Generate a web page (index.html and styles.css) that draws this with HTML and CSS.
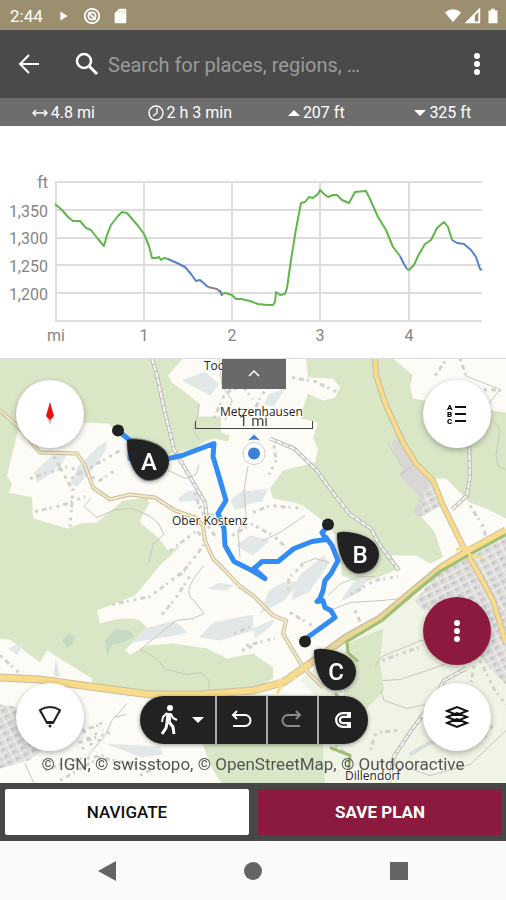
FILE: index.html
```
<!DOCTYPE html>
<html lang="en">
	<head>
		<meta charset="UTF-8"/>
		<meta name="viewport" content="width=device-width, initial-scale=1"/>
		<title>Route planner</title>
		<link rel="stylesheet" href="styles.css">
	</head>
	<body>
		<div class="statusBar">
			<span class="clock">2:44</span>
			<svg class="statusIcon" viewBox="0 0 20 20"><path d="M6 5l8 5-8 5z" fill="#fff"/></svg>
			<svg class="statusIcon" viewBox="0 0 20 20" fill="none" stroke="#fff" stroke-width="2"><circle cx="10" cy="10" r="8"/><circle cx="10" cy="10" r="4"/><path d="M6 6l8 8"/></svg>
			<svg class="statusIcon" viewBox="0 0 20 20"><path d="M9 2h7q1 0 1 1v14q0 1-1 1H5q-1 0-1-1V7z" fill="#fff"/><path d="M9 4v2M12 4v2M15 4v2" stroke="#c4baa2"/></svg>
			<span class="fill"></span>
			<svg class="statusIcon" viewBox="0 0 20 20"><path d="M1 6q9-7 18 0l-9 11z" fill="#fff"/></svg>
			<svg class="statusIcon" viewBox="0 0 20 20"><path d="M17 3v14H3z" fill="none" stroke="#fff" stroke-width="2"/><path d="M12 8v9H3z" fill="#fff"/></svg>
			<svg class="statusIcon" viewBox="0 0 20 20"><path d="M8 2h4v2h3v14H5V4h3z" fill="#fff"/></svg>
		</div>
		<header class="searchBar">
			<button type="button" class="iconButton" aria-label="Back"><svg width="24" height="24" viewBox="0 0 24 24" fill="none" stroke="#fff" stroke-width="2"><path d="M22 12H4M12 3l-9 9 9 9"/></svg></button>
			<label class="searchIcon" for="search"><svg width="24" height="24" viewBox="0 0 24 24" fill="none" stroke="#fff"><circle cx="9" cy="9" r="7" stroke-width="2.5"/><path d="M14 14l8 8" stroke-width="3"/></svg></label>
			<input type="text" id="search" class="searchInput" aria-label="Search" placeholder="Search for places, regions, …"/>
			<button type="button" class="iconButton" aria-label="More"><svg width="24" height="24" viewBox="0 0 24 24" fill="#fff"><circle cx="12" cy="4" r="3"/><circle cx="12" cy="12" r="3"/><circle cx="12" cy="20" r="3"/></svg></button>
		</header>
		<div class="stats">
			<span class="stat"><svg width="16" height="16" viewBox="0 0 16 16" fill="none" stroke="#fff" stroke-width="1.5"><path d="M1 8h14M4 5L1 8l3 3M12 5l3 3-3 3"/></svg>4.8 mi</span>
			<span class="stat"><svg width="16" height="16" viewBox="0 0 16 16" fill="none" stroke="#fff" stroke-width="1.4"><circle cx="8" cy="8" r="7"/><path d="M9 3v5l-4 3M8 1v1M1 8h1"/></svg>2 h 3 min</span>
			<span class="stat"><svg width="12" height="16" viewBox="0 0 12 16"><path d="M0 11l6-6 6 6z" fill="#fff"/></svg>207 ft</span>
			<span class="stat"><svg width="12" height="16" viewBox="0 0 12 16"><path d="M0 5h12l-6 6z" fill="#fff"/></svg>325 ft</span>
		</div>
		<section class="chart">
			<svg viewBox="0 126 506 232">
				<path class="grid" d="M55 182H482M55 210H482M55 238H482M55 265H482M55 293H482M55 321H482M56 182V321M144 182V321M232 182V321M320 182V321M409 182V321"/>
				<g class="axis" text-anchor="end">
					<text x="48" y="188">ft</text>
					<text x="48" y="217">1,350</text>
					<text x="48" y="244">1,300</text>
					<text x="48" y="272">1,250</text>
					<text x="48" y="300">1,200</text>
				</g>
				<g class="axis" text-anchor="middle">
					<text x="56" y="341">mi</text>
					<text x="144" y="341">1</text>
					<text x="232" y="341">2</text>
					<text x="320" y="341">3</text>
					<text x="409" y="341">4</text>
				</g>
				<path class="profile" d="M55 204L62 210L68 217L73 221L80 221L86 228L91 230L98 239L104 246L107 235L111 225L118 216L122 212L127 213L133 220L139 227L144 234L149 246L152 258L156 258L159 257L161 260L164 258L168 259M222 294L225 293L232 295L236 299L241 299L250 301L258 304L267 305L273 305L275 302L276 292L280 295L285 294L287 288L291 260L296 229L301 203L305 202L309 197L313 198L318 194L320 190L324 194L328 197L333 195L337 195L342 200L349 203L355 192L366 191L370 199L378 217L386 230L393 247L400 256M407 269L409 270L414 265L418 256L425 244L431 240L437 228L444 222L448 227L452 240"/>
				<path class="profile blue" d="M168 259L177 263L185 267L191 274L196 281L200 280L208 287M220 290L222 296M400 256L404 264L407 269M452 240L457 243L464 244L471 250L476 257L480 269L482 270"/>
				<path class="profile grey" d="M208 287L217 289L220 292"/>
			</svg>
		</section>
		<main class="map">
			<svg class="mapCanvas" viewBox="0 358 506 425" preserveAspectRatio="xMidYMid slice">
				<defs>
					<pattern id="streets" width="9" height="7" patternUnits="userSpaceOnUse" patternTransform="rotate(-27)"><path d="M0 1h9M1 0v7" stroke="#f3f2ee"/><path d="M3 3h3v2h-3z" fill="#c4c4c4"/></pattern>
					<path id="pin" d="M0 2Q3-1 14 1C31 4 42 11 42 23A20 19 0 0 1 22 42C9 42 0 23 0 2z"/>
				</defs>
				<rect y="358" width="506" height="425" fill="#fcfbf5"/>

				<!-- open land south of the main road -->
				<path fill="#f0f4e4" d="M506 548L410 598L340 645L300 680L320 700V783H506z"/>

				<!-- forest -->
				<g fill="#dae7c7">
					<path d="M0 358H183L168 375L172 382L188 394L200 404L198 416H221V432L230 435L228 441L214 438L205 441L195 448L169 454L130 440L108 423L82 422L18 430L12 455L7 475L12 483L9 492L32 497L33 518L68 528L80 523L97 522L115 507L123 500L147 497L150 503L143 513L140 522L158 537L168 550L180 546L160 565L152 575L135 595L97 610L100 623Q125 615 140 620L147 627L125 650L130 654L147 645L173 643L207 648L227 658L253 653L273 667V678L253 690L150 693L92 683V678L47 650L40 662L10 639L0 638z"/>
					<path d="M306 358L308 377L333 378L340 387L335 397L323 400L308 393L303 408L301 418L318 422L313 438L318 448L315 462L283 470L270 488L273 498L293 502L303 505L320 518L336 535L342 575L362 583L400 568L391 555L416 555L430 563L443 557L435 532L423 518L413 512L441 505L433 478L446 478L470 502L486 508L506 518V412L436 402L413 398L410 385L413 375L393 358z"/>
					<path d="M222 783L213 770L203 745L208 700L250 694L320 695L325 783z"/>
					<path d="M350 642L383 628L380 662L384 690L365 710L345 700L340 660z"/>
				</g>
				<path d="M62 640l7-7 6 3-2 8-6 3zM105 640l10-11 14 1 6 6-12 6-11 2-5 12z" fill="#c5d9c3"/>

				<!-- meadows and ponds -->
				<g fill="#e1e8e7">
					<path d="M34 472L53 454L69 451L62 463L48 475L37 482zM78 466L98 446L107 441L105 451L91 471L77 486L70 484zM178 498L188 490L200 491V500L180 501zM132 642L145 628L174 620L188 632L170 636zM199 637L213 622L253 614V630L220 640zM208 588L220 582L234 585L225 590zM236 545L250 535L270 540L253 555zM230 500L244 489L255 492L245 507L235 509zM269 590L283 582L302 580L284 600L260 613zM299 575L324 555L329 563L309 592L291 600zM353 582L368 576L361 591L340 601zM253 490L268 488L262 501L244 504zM105 743L160 746L163 754L142 757zM253 628L275 618L271 626L255 638zM182 380L205 371L219 384L210 395zM286 387L274 406L263 404L269 394zM24 642L17 654L8 648zM56 658L60 676H53z"/>
				</g>
				<path d="M410 754L430 742L458 741L487 735" fill="none" stroke="#d5dfdc" stroke-width="4"/>

				<!-- built-up areas -->
				<g id="town">
					<path fill="#d8d7d5" d="M391 442L400 438L416 462L433 482L441 505L420 517L413 512L420 497L400 475L403 467zM465 557L506 535V684L490 668L480 655L445 610L422 609L415 600L435 576z"/>
					<path fill="url(#streets)" d="M424 492L433 482L441 505L422 515zM465 557L506 535V684L490 668L480 655L445 610L422 609L415 600L435 576z"/>
					<path fill="#d8d7d5" d="M0 704L14 706L28 720L42 750L28 760L0 768z"/>
					<path fill="url(#streets)" d="M0 704L14 706L28 720L42 750L28 760L0 768zM75 725L102 720L105 743L77 755z"/>
				</g>

				<!-- tracks, houses and field paths -->
				<path class="track" d="M388 442L402 466M400 474L416 463M204 565Q180 592 194 600L204 613L193 618L176 620L140 649L155 657L166 669L187 674L201 672L209 680V690M149 562L153 544L164 534L158 522L147 514L132 508L115 509L97 517L84 506L91 498M168 470L186 478L196 474L199 464M199 404L198 415L193 429L200 440M240 557L238 530L246 515L244 489L248 466M263 540L280 532L305 515M300 564L315 558L330 562M328 595L341 583L358 576L375 576M330 610L350 602L382 600L402 598M375 666L382 656L421 640L469 633M383 680L400 679L436 667L467 655M381 690L384 700L407 708L425 704M127 703L112 720L105 735L88 755M25 763L34 783M114 717L126 714M410 768L430 775L470 764L506 730M495 422L500 430L496 455L498 466L506 469M465 375L500 389L482 412M219 358L222 385L232 400L225 420M234 390L253 378L275 371"/>
				<path class="houses" d="M54 456L65 476L73 490L70 526M30 478L68 466L100 480L115 470M35 511L62 505L85 496M71 478L120 450M112 604L150 596L171 580L185 570M162 614L177 596L190 575M180 575L206 542L197 530L169 551M200 505L208 525L216 537M232 535L253 523M195 492L201 512L224 518M214 418L224 395L240 382L253 399M253 413L261 395L272 382L285 378M292 377L315 381L338 392M274 445L276 460L269 474M253 512L270 505L303 508M256 526L273 535L286 547M288 590L289 577L303 564M382 660L410 650L424 645M397 730L376 732L369 754M350 594L375 580L398 576M435 375L448 357M460 358L467 378M484 389L506 390M470 505L482 524L487 539M480 660L495 690L506 704M474 665L470 688M0 655L22 675M82 730L98 725M80 742L110 732M45 770L70 760L105 755M60 780L100 757L140 765M140 775L165 762M335 745L350 755M234 633L253 625M242 650L252 646M475 710L495 730M246 645L275 638M290 612L312 625M355 610L362 625"/>
				<path class="rail" d="M152 358L157 375L164 408L174 449L191 478L205 502L208 525M270 438L294 448L316 469L335 495L350 514L371 528L378 542L399 570M469 440L470 475L467 495L452 509M466 668L444 680L432 702L412 729L394 756L389 783"/>
				<path class="railFill" d="M152 358L157 375L164 408L174 449L191 478L205 502L208 525M270 438L294 448L316 469L335 495L350 514L371 528L378 542L399 570M469 440L470 475L467 495L452 509M466 668L444 680L432 702L412 729L394 756L389 783"/>

				<!-- roads: dark casing first, then the fill -->
				<g class="roads">
					<g class="casing">
						<path stroke-width="4" d="M0 410L17 425L40 452L77 453L85 465L93 487L110 499L130 494L155 497L175 510L195 517L203 525L205 540L213 558L225 570L240 586L253 595L273 615L286 620L283 633L303 667L323 687"/>
						<path stroke-width="6" d="M375 358L376 375L386 405L403 442L416 463L433 480L443 505L466 552L478 572L493 600L506 643"/>
						<path stroke-width="8" d="M506 530L466 552L440 568L410 593L380 618L346 637L310 663L283 682L253 690L200 694L150 694L90 686L40 679L0 677"/>
					</g>
					<path stroke="#f3e9c6" stroke-width="2" d="M0 410L17 425L40 452L77 453L85 465L93 487L110 499L130 494L155 497L175 510L195 517L203 525L205 540L213 558L225 570L240 586L253 595L273 615L286 620L283 633L303 667L323 687"/>
					<path stroke="#f8db8b" stroke-width="4" d="M375 358L376 375L386 405L403 442L416 463L433 480L443 505L466 552L478 572L493 600L506 643"/>
					<path stroke="#f8db8b" stroke-width="6" d="M506 530L466 552L440 568M310 663L283 682L253 690L200 694L150 694L90 686L40 679L0 677"/>
					<path stroke="#ead795" stroke-width="5" d="M440 568L410 593L380 618L346 637L310 663"/>
					<path stroke="#9fbf76" stroke-width="3" d="M506 534L466 556L440 571L412 594L382 620L347 641L348 652L358 661M335 693L340 698M330 747L350 755L348 774"/>
					<path stroke="#f8db8b" stroke-width="3" d="M277 681L296 677M456 549L466 547L470 555L481 557M283 682L277 693"/>
				</g>

				<path class="route" d="M118 430L130 440L130 458L150 462L182 455L214 443L213 456L219 476L226 500L218 513L224 528L225 545L234 561L252 570L265 578L254 568L262 561L278 561L294 548L312 541L326 539L322 532L328 526M326 537L332 545L338 560L331 573L325 580L323 590L320 598L317 601L323 600L325 607L331 610L335 617L306 638"/>
				<g class="place">
					<text x="204" y="369">Toc</text>
					<text x="220" y="415">Metzenhausen</text>
					<text x="172" y="524">Ober Kostenz</text>
					<text x="345" y="779">Dillendorf</text>
				</g>
				<g fill="#222">
					<circle cx="118" cy="430" r="6"/>
					<circle cx="328" cy="524" r="6"/>
					<circle cx="305" cy="641" r="6"/>
				</g>
				<g class="pins">
					<use href="#pin" x="127" y="438"/>
					<use href="#pin" x="337" y="531"/>
					<use href="#pin" x="314" y="648"/>
					<text x="149" y="469">A</text>
					<text x="360" y="562">B</text>
					<text x="336" y="679">C</text>
				</g>
				<circle class="position" cx="254" cy="453" r="11"/>
				<circle cx="254" cy="453" r="6" fill="#3b7fd6"/>
				<path d="M248 440q6-2 12 0l-6-6z" fill="#3b7fd6"/>
			</svg>
			<div class="overlay">
				<div class="controls">
					<div class="side">
						<button type="button" class="round" aria-label="Compass"><svg width="32" height="32" viewBox="0 0 32 32"><path d="M12 17l4 10 4-10z" fill="#c4c4c4"/><path d="M16 4l4 14-4 4-4-4z" fill="#e8110f"/></svg></button>
						<button type="button" class="round" aria-label="Field of view"><svg width="32" height="32" viewBox="0 0 32 32" fill="none" stroke="#222" stroke-width="2"><path d="M6 9q10-6 20 0l-7 13h-6zM6 9l1 3M26 9l-1 3M13 21h6"/><circle cx="16" cy="25" r="1.5" fill="#222" stroke="none"/></svg></button>
					</div>
					<div class="middle">
						<button type="button" class="collapse" aria-label="Hide profile"><svg width="16" height="16" viewBox="0 0 16 16" fill="none" stroke="#fff" stroke-width="1.5"><path d="M3 10l5-5 5 5"/></svg></button>
						<div class="scale">1 mi</div>
						<div class="fill"></div>
						<div class="toolbar">
							<button type="button" class="tool wide" aria-label="Walking">
								<svg width="24" height="32" viewBox="0 0 24 32" fill="none" stroke="#fff" stroke-linejoin="round"><circle cx="12" cy="4" r="3" fill="#fff" stroke="none"/><path d="M11 9l-1 10" stroke-width="5"/><path d="M9 9l-4 4-1 5M13 10l2 4 4 2" stroke-width="2"/><path d="M9 19l-1 5-4 6M11 18l4 5 1 7" stroke-width="3"/></svg>
								<svg width="12" height="12" viewBox="0 0 12 12"><path d="M0 3h12l-6 6z" fill="#fff"/></svg>
							</button>
							<button type="button" class="tool" aria-label="Undo"><svg width="24" height="24" viewBox="0 0 24 24" fill="none" stroke="#fff" stroke-width="2"><path d="M8 3L4 7l4 4M4 7h12a5 5 0 0 1 0 11H4"/></svg></button>
							<button type="button" class="tool" aria-label="Redo"><svg width="24" height="24" viewBox="0 0 24 24" fill="none" stroke="#8a8a8a" stroke-width="2"><path d="M16 3l4 4-4 4M20 7H8a5 5 0 0 0 0 11h12"/></svg></button>
							<button type="button" class="tool" aria-label="Snap to path"><svg width="24" height="24" viewBox="0 0 24 24" fill="none"><path d="M20 7h-8a5 5 0 0 0 0 10h8" stroke="#fff" stroke-width="6"/><path d="M16 7h-4a5 5 0 0 0 0 10h4" stroke="#222" stroke-width="1.5"/></svg></button>
						</div>
					</div>
					<div class="side">
						<button type="button" class="round" aria-label="Waypoints"><svg width="24" height="24" viewBox="0 0 24 24"><path d="M10 5h11M10 12h11M10 19h11" stroke="#111" stroke-width="2"/><g class="abc"><text x="2" y="8">A</text><text x="2" y="15">B</text><text x="2" y="22">C</text></g></svg></button>
						<div class="fill"></div>
						<button type="button" class="round red" aria-label="More actions"><svg width="24" height="24" viewBox="0 0 24 24" fill="#fff"><circle cx="12" cy="4" r="3"/><circle cx="12" cy="12" r="3"/><circle cx="12" cy="20" r="3"/></svg></button>
						<button type="button" class="round" aria-label="Layers"><svg width="24" height="24" viewBox="0 0 24 24" fill="#fff" stroke="#111" stroke-width="2"><path d="M2 18l10-4 10 4-10 4zM2 12l10-4 10 4-10 4zM2 6l10-4 10 4-10 4z"/></svg></button>
					</div>
				</div>
				<div class="credits">© IGN, © swisstopo, © OpenStreetMap, © Outdooractive</div>
			</div>
		</main>
		<div class="actions">
			<button type="button" class="action">NAVIGATE</button>
			<button type="button" class="action save">SAVE PLAN</button>
		</div>
		<nav class="navBar">
			<button type="button" class="iconButton" aria-label="System back"><svg width="20" height="20" viewBox="0 0 20 20"><path d="M19 0v20L1 10z" fill="#646464"/></svg></button>
			<button type="button" class="iconButton" aria-label="Home"><svg width="20" height="20" viewBox="0 0 20 20"><circle cx="10" cy="10" r="9" fill="#646464"/></svg></button>
			<button type="button" class="iconButton" aria-label="Recent"><svg width="20" height="20" viewBox="0 0 20 20"><path d="M1 1h18v18H1z" fill="#646464"/></svg></button>
		</nav>
	</body>
</html>
```
FILE: styles.css
```
*{
	box-sizing:border-box;
}
body{
	margin:0;
	min-height:100vh;
	display:flex;
	flex-direction:column;
	font-family:Roboto, "Liberation Sans", sans-serif;
	background-color:#fafafa;
}
button{
	border:0;
	padding:0;
	font-family:inherit;
	display:flex;
	align-items:center;
	justify-content:center;
}
svg{
	display:block;
	flex:none;
}
.fill{
	flex:1;
}
.statusBar{
	display:flex;
	align-items:center;
	gap:10px;
	height:30px;
	padding:1px 4px 0 10px;
	color:white;
	background-color:#9c8f70;
}
.clock{
	font-size:17px;
	margin-right:2px;
}
.statusIcon{
	width:18px;
	height:18px;
}
.statusBar .fill ~ .statusIcon{
	margin-left:-8px;
}
.searchBar{
	display:flex;
	align-items:center;
	height:68px;
	padding:0 5px;
	background-color:#4a4a4a;
}
.iconButton{
	width:48px;
	height:48px;
	background-color:transparent;
}
.searchIcon{
	margin:0 9px 0 22px;
}
.searchInput{
	flex:1;
	min-width:0;
	border:0;
	padding:2px 0 0 0;
	font-family:inherit;
	font-size:20px;
	color:white;
	background-color:transparent;
}
.searchInput::placeholder{
	color:#9a9a9a;
}
.stats{
	display:flex;
	height:28px;
	background-color:#6d6d6d;
	color:white;
	font-size:16px;
	padding-top:1px;
}
.stat{
	flex:1;
	display:flex;
	align-items:center;
	justify-content:center;
	gap:3px;
}
.chart{
	background-color:white;
	border-bottom:1px solid #ddd;
}
.chart svg{
	width:100%;
}
.grid{
	stroke:#ddd;
	stroke-width:2;
}
.axis{
	font-size:16px;
	fill:#858585;
}
.profile{
	fill:none;
	stroke:#60b64b;
	stroke-width:2;
	stroke-linejoin:round;
}
.blue{
	stroke:#5682c8;
}
.grey{
	stroke:#888;
}
.map{
	flex:1;
	position:relative;
	min-height:400px;
	overflow:hidden;
}
.mapCanvas{
	position:absolute;
	width:100%;
	height:100%;
}
.track{
	fill:none;
	stroke:#c9c6bf;
}
.houses{
	fill:none;
	stroke:#d2d2d0;
	stroke-width:3;
	stroke-dasharray:3 4 5 3 2 5;
}
.rail{
	fill:none;
	stroke:#bbb;
	stroke-width:4;
}
.railFill{
	fill:none;
	stroke:#f8f8f4;
	stroke-width:2;
	stroke-dasharray:6 1;
}
.roads{
	fill:none;
	stroke-linejoin:round;
}
.casing{
	stroke:#c9bd9f;
}
.place{
	font-family:"Open Sans", sans-serif;
	font-size:12px;
	fill:#222;
	stroke:white;
	stroke-width:2px;
	paint-order:stroke;
}
.route{
	fill:none;
	stroke:#318cf5;
	stroke-width:5;
	stroke-linejoin:round;
	stroke-linecap:round;
}
.pins{
	fill:#222;
	filter:drop-shadow(0 1px 2px #777);
}
.pins text{
	fill:white;
	font-size:24px;
	font-weight:500;
	text-anchor:middle;
}
.position{
	fill:white;
	stroke:#ccc;
}
.overlay{
	position:absolute;
	inset:0;
	display:flex;
	flex-direction:column;
}
.controls{
	flex:1;
	display:flex;
	justify-content:space-between;
	padding:0 15px 0 16px;
}
.side{
	display:flex;
	flex-direction:column;
	justify-content:space-between;
	gap:18px;
	padding-top:21px;
}
.round{
	width:68px;
	height:68px;
	border-radius:50%;
	background-color:white;
	box-shadow:0 2px 6px rgba(0,0,0,.3);
}
.red{
	background-color:#8c1a3f;
}
.abc{
	font-size:8px;
	font-weight:900;
}
.middle{
	display:flex;
	flex-direction:column;
	align-items:center;
	padding-bottom:7px;
}
.collapse{
	width:64px;
	height:30px;
	background-color:#696969;
}
.scale{
	width:118px;
	height:8px;
	margin-top:32px;
	border:1px solid #444;
	border-top:0;
	font-size:15px;
	line-height:0;
	text-align:center;
	color:#444;
}
.toolbar{
	display:flex;
	gap:2px;
	height:48px;
	border-radius:24px;
	overflow:hidden;
	background-color:#aaa;
	box-shadow:0 1px 4px rgba(0,0,0,.4);
}
.tool{
	width:49px;
	background-color:#222;
}
.wide{
	width:75px;
	gap:10px;
	padding-left:8px;
}
.credits{
	height:32px;
	line-height:27px;
	text-align:center;
	font-size:17px;
	color:#555;
}
.actions{
	display:flex;
	gap:9px;
	padding:6px 4px 6px 5px;
	background-color:#474747;
}
.action{
	flex:1;
	height:46px;
	border-radius:2px;
	background-color:white;
	color:#111;
	font-size:17px;
	font-weight:500;
}
.save{
	background-color:#8c1a3f;
	color:white;
	font-weight:700;
}
.navBar{
	display:flex;
	justify-content:center;
	align-items:center;
	gap:98px;
	height:59px;
}
```
